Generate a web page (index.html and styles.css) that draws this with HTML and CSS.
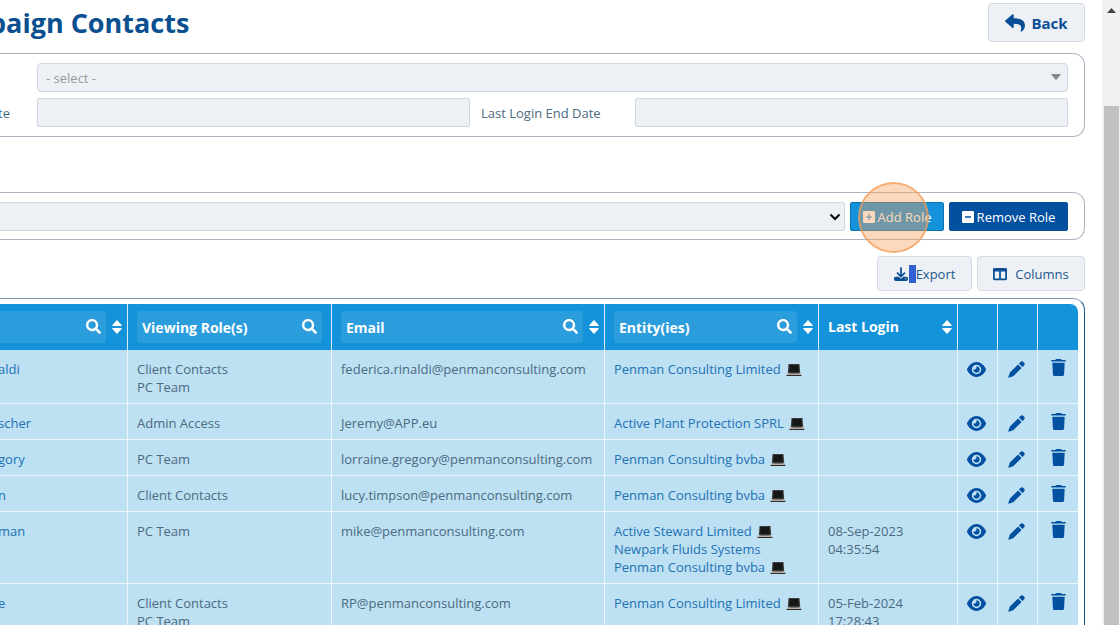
FILE: index.html
```html
<!DOCTYPE html>
<html lang="en">
<head>
    <meta charset="UTF-8">
    <meta name="viewport" content="width=device-width, initial-scale=1.0">
    <title>Campaign Contacts</title>
    <link rel="stylesheet" href="styles.css">
</head>
<body>
    <svg class="sprite" aria-hidden="true">
        <symbol id="reply" viewBox="0 0 512 512"><path d="M8.309 189.836L184.313 37.851C199.719 24.546 224 35.347 224 56.015v80.053c160.629 1.839 288 34.032 288 186.258 0 61.441-39.581 122.309-83.333 154.132-13.653 9.931-33.111-2.533-28.077-18.631 45.344-145.012-21.507-183.51-176.59-185.742V360c0 20.7-24.3 31.453-39.687 18.164l-176.004-152c-11.071-9.562-11.086-26.753 0-36.328z"/></symbol>
        <symbol id="search" viewBox="0 0 512 512"><path d="M505 442.7L405.3 343c-4.5-4.5-10.6-7-17-7H372c27.6-35.3 44-79.7 44-128C416 93.1 322.9 0 208 0S0 93.1 0 208s93.1 208 208 208c48.3 0 92.7-16.4 128-44v16.3c0 6.4 2.5 12.5 7 17l99.7 99.7c9.4 9.4 24.6 9.4 33.9 0l28.3-28.3c9.4-9.4 9.4-24.6.1-34zM208 336c-70.7 0-128-57.2-128-128 0-70.7 57.2-128 128-128 70.7 0 128 57.2 128 128 0 70.7-57.2 128-128 128z"/></symbol>
        <symbol id="eye" viewBox="0 0 576 512"><path fill-rule="evenodd" d="M288 32c-80.8 0-145.5 36.8-192.6 80.6C48.6 156 17.3 208 2.5 243.7c-3.3 7.9-3.3 16.7 0 24.6C17.3 304 48.6 356 95.4 399.4C142.5 443.2 207.2 480 288 480s145.5-36.8 192.6-80.6c46.8-43.5 78.1-95.4 93-131.1c3.3-7.9 3.3-16.7 0-24.6c-14.9-35.7-46.2-87.7-93-131.1C433.5 68.8 368.8 32 288 32zM144 256a144 144 0 1 1 288 0 144 144 0 1 1-288 0z"/><path d="M288 192c0 35.3-28.700 64-64 64c-7.100 0-13.900-1.200-20.300-3.300c-5.500-1.800-11.900 1.600-11.700 7.400c.3 6.900 1.300 13.800 3.200 20.700c13.700 51.200 66.400 81.600 117.600 67.900s81.600-66.400 67.900-117.600c-11.100-41.500-47.800-69.400-88.600-71.100c-5.800-.2-9.200 6.100-7.400 11.700c2.100 6.400 3.300 13.200 3.300 20.300z"/></symbol>
        <symbol id="pen" viewBox="0 0 17 17"><path d="M10 3.400L13.600 7 5.800 14.800Q5.200 15.300 1.200 16.600.1 16.900.4 15.800 1.700 11.800 2.200 11.200zM10.900 2.500L12.500.9Q14-.4 15.500 1.100L15.900 1.500Q17.400 3 16.100 4.500L14.500 6.100z"/></symbol>
        <symbol id="trash" viewBox="0 0 448 512"><path d="M135.2 17.7L128 32H24C8 32 0 42 0 54S8 78 24 78H424c16 0 24-12 24-24s-8-22-24-22H320l-7.200-14.300C307.400 6.800 296.300 0 284.200 0H163.800c-12.100 0-23.200 6.800-28.600 17.700zM410 110H38L56 467c1.600 25.300 20 45 45 45H347c25 0 43.400-19.700 45-45z"/></symbol>
        <symbol id="download" viewBox="0 0 512 512"><path d="M288 32c0-17.7-14.3-32-32-32s-32 14.3-32 32V274.7l-73.4-73.4c-12.5-12.5-32.8-12.5-45.3 0s-12.5 32.8 0 45.3l128 128c12.5 12.5 32.8 12.5 45.3 0l128-128c12.5-12.5 12.5-32.8 0-45.3s-32.8-12.5-45.3 0L288 274.7V32zM64 352c-35.3 0-64 28.7-64 64v32c0 35.3 28.7 64 64 64H448c35.3 0 64-28.7 64-64V416c0-35.3-28.7-64-64-64H346.5l-45.3 45.3c-25 25-65.5 25-90.5 0L165.5 352H64zm368 56a24 24 0 1 1 0 48 24 24 0 1 1 0-48z"/></symbol>
        <symbol id="columns" viewBox="0 0 512 512"><path d="M464 32H48C21.49 32 0 53.49 0 80v352c0 26.51 21.49 48 48 48h416c26.51 0 48-21.49 48-48V80c0-26.51-21.49-48-48-48zM224 416H64V160h160v256zm224 0H288V160h160v256z"/></symbol>
        <symbol id="plus" viewBox="0 0 12 12"><path fill-rule="evenodd" d="M1 0h10a1 1 0 0 1 1 1v10a1 1 0 0 1-1 1H1a1 1 0 0 1-1-1V1a1 1 0 0 1 1-1zM5.4 3v2.4H3v1.2h2.4V9h1.2V6.600H9V5.400H6.600V3z"/></symbol>
        <symbol id="minus" viewBox="0 0 12 12"><path fill-rule="evenodd" d="M1 0h10a1 1 0 0 1 1 1v10a1 1 0 0 1-1 1H1a1 1 0 0 1-1-1V1a1 1 0 0 1 1-1zM3 5.300v1.400h6V5.300z"/></symbol>
        <symbol id="sort" viewBox="0 0 10 14"><path d="M5 0l4.600 5q.6 1-.4 1H.8q-1 0-.4-1zM5 14L.4 9q-.6-1 .4-1h8.400q1 0 .4 1z"/></symbol>
        <symbol id="caret" viewBox="0 0 10 6"><path d="M1 0h8q1 0 .4 1L5.600 5.500q-.6.6-1.200 0L.6 1Q0 0 1 0z"/></symbol>
        <symbol id="chevron" viewBox="0 0 12 8"><path d="M1.500 1.500L6 6l4.500-4.500" fill="none" stroke="#000" stroke-width="2"/></symbol>
        <symbol id="laptop" viewBox="0 0 16 14"><path fill="#3c3c3c" d="M2.500 1h11l.7 9H1.800z"/><path fill="#161616" d="M3.600 2h8.800l.4 7H3.200z"/><path fill="#b5aca6" d="M1.600 10h12.800l1.100 2H.5z"/><path fill="#77706c" d="M3.500 10h9l.4 1H3.100z"/><path fill="#2c2c2c" d="M.5 12h15v1H.5z"/></symbol>
    </svg>

    <main class="page">
        <header class="page-header">
            <h1>paign Contacts</h1>
            <button type="button" class="btn back-btn"><svg><use href="#reply"/></svg>Back</button>
        </header>

        <form class="panel filters">
            <div class="select-wrap wide">
                <select id="filter" class="placeholder" aria-label="Filter"><option>- select -</option></select>
                <svg class="caret"><use href="#caret"/></svg>
            </div>
            <label for="startDate">te</label>
            <input type="text" id="startDate">
            <label for="endDate">Last Login End Date</label>
            <input type="text" id="endDate">
        </form>

        <form class="panel roles">
            <div class="select-wrap">
                <select id="role" aria-label="Role"><option></option></select>
                <svg class="chevron"><use href="#chevron"/></svg>
            </div>
            <button type="button" class="role-btn add"><svg><use href="#plus"/></svg>Add Role<span class="click-ring"></span></button>
            <button type="button" class="role-btn remove"><svg><use href="#minus"/></svg>Remove Role</button>
        </form>

        <div class="toolbar">
            <button type="button" class="btn export"><svg><use href="#download"/></svg><span class="selected"></span>Export</button>
            <button type="button" class="btn columns"><svg><use href="#columns"/></svg>Columns</button>
        </div>

        <section class="panel table-panel">
            <table>
                <colgroup>
                    <col>
                    <col class="col-roles">
                    <col class="col-email">
                    <col class="col-entity">
                    <col class="col-login">
                    <col class="col-icon">
                    <col class="col-icon">
                    <col class="col-icon">
                </colgroup>
                <thead>
                    <tr>
                        <th><div class="head"><div class="search"><input type="text" aria-label="Name"><svg><use href="#search"/></svg></div><svg class="sort"><use href="#sort"/></svg></div></th>
                        <th><div class="head"><div class="search"><input type="text" placeholder="Viewing Role(s)" aria-label="Viewing Role(s)"><svg><use href="#search"/></svg></div></div></th>
                        <th><div class="head"><div class="search"><input type="text" placeholder="Email" aria-label="Email"><svg><use href="#search"/></svg></div><svg class="sort"><use href="#sort"/></svg></div></th>
                        <th><div class="head"><div class="search"><input type="text" placeholder="Entity(ies)" aria-label="Entity(ies)"><svg><use href="#search"/></svg></div><svg class="sort"><use href="#sort"/></svg></div></th>
                        <th><div class="head"><span>Last Login</span><svg class="sort"><use href="#sort"/></svg></div></th>
                        <th></th>
                        <th></th>
                        <th></th>
                    </tr>
                </thead>
                <tbody>
                    <tr>
                        <td><a href="#">aldi</a></td>
                        <td>Client Contacts<br>PC Team</td>
                        <td>federica.rinaldi@penmanconsulting.com</td>
                        <td><a href="#">Penman Consulting Limited</a><svg class="laptop"><use href="#laptop"/></svg></td>
                        <td></td>
                        <td class="action"><button type="button" aria-label="View"><svg class="eye"><use href="#eye"/></svg></button></td>
                        <td class="action"><button type="button" aria-label="Edit"><svg class="pen"><use href="#pen"/></svg></button></td>
                        <td class="action delete"><button type="button" aria-label="Delete"><svg class="trash"><use href="#trash"/></svg></button></td>
                    </tr>
                    <tr>
                        <td><a href="#">scher</a></td>
                        <td>Admin Access</td>
                        <td>Jeremy@APP.eu</td>
                        <td><a href="#">Active Plant Protection SPRL</a><svg class="laptop"><use href="#laptop"/></svg></td>
                        <td></td>
                        <td class="action"><button type="button" aria-label="View"><svg class="eye"><use href="#eye"/></svg></button></td>
                        <td class="action"><button type="button" aria-label="Edit"><svg class="pen"><use href="#pen"/></svg></button></td>
                        <td class="action delete"><button type="button" aria-label="Delete"><svg class="trash"><use href="#trash"/></svg></button></td>
                    </tr>
                    <tr>
                        <td><a href="#">gory</a></td>
                        <td>PC Team</td>
                        <td>lorraine.gregory@penmanconsulting.com</td>
                        <td><a href="#">Penman Consulting bvba</a><svg class="laptop"><use href="#laptop"/></svg></td>
                        <td></td>
                        <td class="action"><button type="button" aria-label="View"><svg class="eye"><use href="#eye"/></svg></button></td>
                        <td class="action"><button type="button" aria-label="Edit"><svg class="pen"><use href="#pen"/></svg></button></td>
                        <td class="action delete"><button type="button" aria-label="Delete"><svg class="trash"><use href="#trash"/></svg></button></td>
                    </tr>
                    <tr>
                        <td><a href="#">n</a></td>
                        <td>Client Contacts</td>
                        <td>lucy.timpson@penmanconsulting.com</td>
                        <td><a href="#">Penman Consulting bvba</a><svg class="laptop"><use href="#laptop"/></svg></td>
                        <td></td>
                        <td class="action"><button type="button" aria-label="View"><svg class="eye"><use href="#eye"/></svg></button></td>
                        <td class="action"><button type="button" aria-label="Edit"><svg class="pen"><use href="#pen"/></svg></button></td>
                        <td class="action delete"><button type="button" aria-label="Delete"><svg class="trash"><use href="#trash"/></svg></button></td>
                    </tr>
                    <tr>
                        <td><a href="#">man</a></td>
                        <td>PC Team</td>
                        <td>mike@penmanconsulting.com</td>
                        <td><a href="#">Active Steward Limited</a><svg class="laptop"><use href="#laptop"/></svg><br><a href="#">Newpark Fluids Systems</a><br><a href="#">Penman Consulting bvba</a><svg class="laptop"><use href="#laptop"/></svg></td>
                        <td>08-Sep-2023<br>04:35:54</td>
                        <td class="action"><button type="button" aria-label="View"><svg class="eye"><use href="#eye"/></svg></button></td>
                        <td class="action"><button type="button" aria-label="Edit"><svg class="pen"><use href="#pen"/></svg></button></td>
                        <td class="action delete"><button type="button" aria-label="Delete"><svg class="trash"><use href="#trash"/></svg></button></td>
                    </tr>
                    <tr>
                        <td><a href="#">e</a></td>
                        <td>Client Contacts<br>PC Team</td>
                        <td>RP@penmanconsulting.com</td>
                        <td><a href="#">Penman Consulting Limited</a><svg class="laptop"><use href="#laptop"/></svg></td>
                        <td>05-Feb-2024<br>17:28:43</td>
                        <td class="action"><button type="button" aria-label="View"><svg class="eye"><use href="#eye"/></svg></button></td>
                        <td class="action"><button type="button" aria-label="Edit"><svg class="pen"><use href="#pen"/></svg></button></td>
                        <td class="action delete"><button type="button" aria-label="Delete"><svg class="trash"><use href="#trash"/></svg></button></td>
                    </tr>
                </tbody>
            </table>
        </section>
    </main>

    <div class="scrollbar">
        <svg><path d="M0 5l4.500-5L9 5z"/></svg>
        <div class="thumb"></div>
    </div>
</body>
</html>
```
FILE: styles.css
```css
* {
    box-sizing: border-box;
}

body {
    display: flex;
    height: 100vh;
    margin: 0;
    overflow: hidden;
    font-family: 'Open Sans', sans-serif;
    font-size: 13px;
    line-height: 18px;
    color: #4c6a80;
    background-color: #fff;
}

svg {
    fill: currentColor;
    flex: none;
}

.sprite {
    position: absolute;
    width: 0;
    height: 0;
}

input, select, button {
    font: inherit;
    color: inherit;
}

button {
    cursor: pointer;
}

a {
    color: #2272b4;
    text-decoration: none;
}

/* the left edge is scrolled out of view */
.page {
    flex: 1;
    min-width: 0;
    margin-left: -11px;
    padding: 3px 17px 0 0;
}

.page-header {
    display: flex;
    justify-content: space-between;
    align-items: flex-start;
    height: 40px;
    margin-bottom: 10px;
}

h1 {
    margin: 0;
    font-size: 27px;
    line-height: 40px;
    color: #0a4f8f;
}

.btn {
    display: flex;
    align-items: center;
    justify-content: center;
    height: 35px;
    padding: 0;
    color: #1b568c;
    background-color: #edf1f6;
    border: 1px solid #d3dae3;
    border-radius: 4px;
}

.back-btn {
    width: 97px;
    height: 39px;
    gap: 6px;
    font-size: 15px;
    font-weight: bold;
    color: #0a4f96;
}

.back-btn svg {
    width: 20px;
    height: 20px;
}

.panel {
    border: 1px solid #abb4c2;
    border-left: none;
    border-radius: 0 12px 12px 0;
}

.filters {
    display: grid;
    grid-template-columns: 31px 1fr 143px 1fr;
    column-gap: 11px;
    row-gap: 6px;
    align-items: center;
    padding: 9px 16px 9px 6px;
    margin-bottom: 55px;
}

.filters label {
    padding-left: 3px;
}

.filters input + label {
    padding-left: 0;
}

.filters input, select {
    width: 100%;
    height: 29px;
    padding: 0 8px;
    background-color: #edf1f6;
    border: 1px solid #cfd6e0;
    border-radius: 2px;
}

.select-wrap {
    position: relative;
    flex: 1;
}

.wide {
    grid-column: 2 / 5;
}

select {
    display: block;
    appearance: none;
}

.placeholder {
    color: #999;
    border-radius: 4px;
}

.caret {
    position: absolute;
    top: 11px;
    right: 7px;
    width: 10px;
    height: 6px;
    color: #888;
}

.chevron {
    position: absolute;
    top: 11px;
    right: 4px;
    width: 12px;
    height: 8px;
}

.roles {
    display: flex;
    gap: 5px;
    padding: 9px 16px 8px 0;
    margin-bottom: 16px;
}

.role-btn {
    position: relative;
    display: flex;
    align-items: center;
    justify-content: center;
    gap: 3px;
    height: 29px;
    padding: 0;
    color: #fff;
    border: 1px solid #0a4f96;
    border-radius: 2px;
}

.role-btn svg {
    width: 12px;
    height: 12px;
}

.add {
    width: 94px;
    background-color: #1492da;
    border-color: #0f71ae;
}

.remove {
    width: 119px;
    background-color: #0250a0;
}

.click-ring {
    position: absolute;
    z-index: 1;
    top: -21px;
    left: 7px;
    width: 71px;
    height: 71px;
    background-color: rgba(247, 160, 90, 0.4);
    border: 2px solid rgba(243, 155, 85, 0.7);
    border-radius: 50%;
}

.toolbar {
    display: flex;
    justify-content: flex-end;
    gap: 5px;
    margin-bottom: 7px;
}

.export {
    width: 95px;
}

.columns {
    width: 108px;
    gap: 8px;
}

.toolbar svg {
    width: 14px;
    height: 14px;
    color: #0a4f96;
}

.selected {
    width: 7px;
    height: 18px;
    margin-left: 1px;
    background-color: #2f61d2;
}

.table-panel {
    padding: 5px 6px 0 0;
    border-color: #1b568c;
    border-top-color: #7f98ad;
}

table {
    width: 100%;
    table-layout: fixed;
    border-collapse: separate;
    border-spacing: 0;
}

.col-roles {
    width: 204px;
}

.col-email {
    width: 273px;
}

.col-entity {
    width: 214px;
}

.col-login {
    width: 139px;
}

.col-icon {
    width: 40px;
}

th {
    height: 46px;
    padding: 0 9px;
    font-size: 14px;
    text-align: left;
    color: #fff;
    background-color: #1492da;
    border-right: 1px solid #d6effa;
}

th:last-child {
    border-radius: 0 8px 0 0;
}

th:last-child, td:last-child {
    border-right: none;
}

.head {
    display: flex;
    align-items: center;
    justify-content: space-between;
    gap: 6px;
}

.search {
    position: relative;
    flex: 1;
}

.search input {
    display: block;
    width: 100%;
    height: 32px;
    padding: 0 32px 0 5px;
    font-weight: bold;
    background-color: #2b9ddd;
    border: none;
    border-radius: 4px;
}

.search input::placeholder {
    color: #fff;
    opacity: 1;
}

.search svg {
    position: absolute;
    top: 8px;
    right: 5px;
    width: 15px;
    height: 15px;
}

.sort {
    width: 10px;
    height: 14px;
    margin-right: -4px;
}

td {
    padding: 10px 0 7px 9px;
    vertical-align: top;
    white-space: nowrap;
    background-color: #bde0f3;
    border-right: 1px solid #e9f6fc;
    border-bottom: 1px solid #e9f6fc;
}

.laptop {
    width: 16px;
    height: 14px;
    margin-left: 5px;
    vertical-align: -3px;
}

.action {
    padding-left: 0;
    text-align: center;
}

.action button {
    display: flex;
    width: 36px;
    height: 18px;
    padding: 0;
    align-items: center;
    justify-content: center;
    color: #0250a0;
    background: none;
    border: none;
}

.action.delete {
    padding-top: 8px;
}

.action.delete button {
    width: 40px;
}

.eye {
    width: 19px;
    height: 17px;
}

.pen {
    width: 17px;
    height: 17px;
}

.trash {
    width: 15px;
    height: 17px;
}

.scrollbar {
    display: flex;
    flex-direction: column;
    align-items: center;
    width: 18px;
    padding-top: 8px;
    background-color: #f1f1f1;
}

.scrollbar svg {
    width: 9px;
    height: 5px;
    fill: #444;
}

.thumb {
    flex: 1;
    width: 15px;
    margin-top: 93px;
    background-color: #c1c1c1;
}
```
